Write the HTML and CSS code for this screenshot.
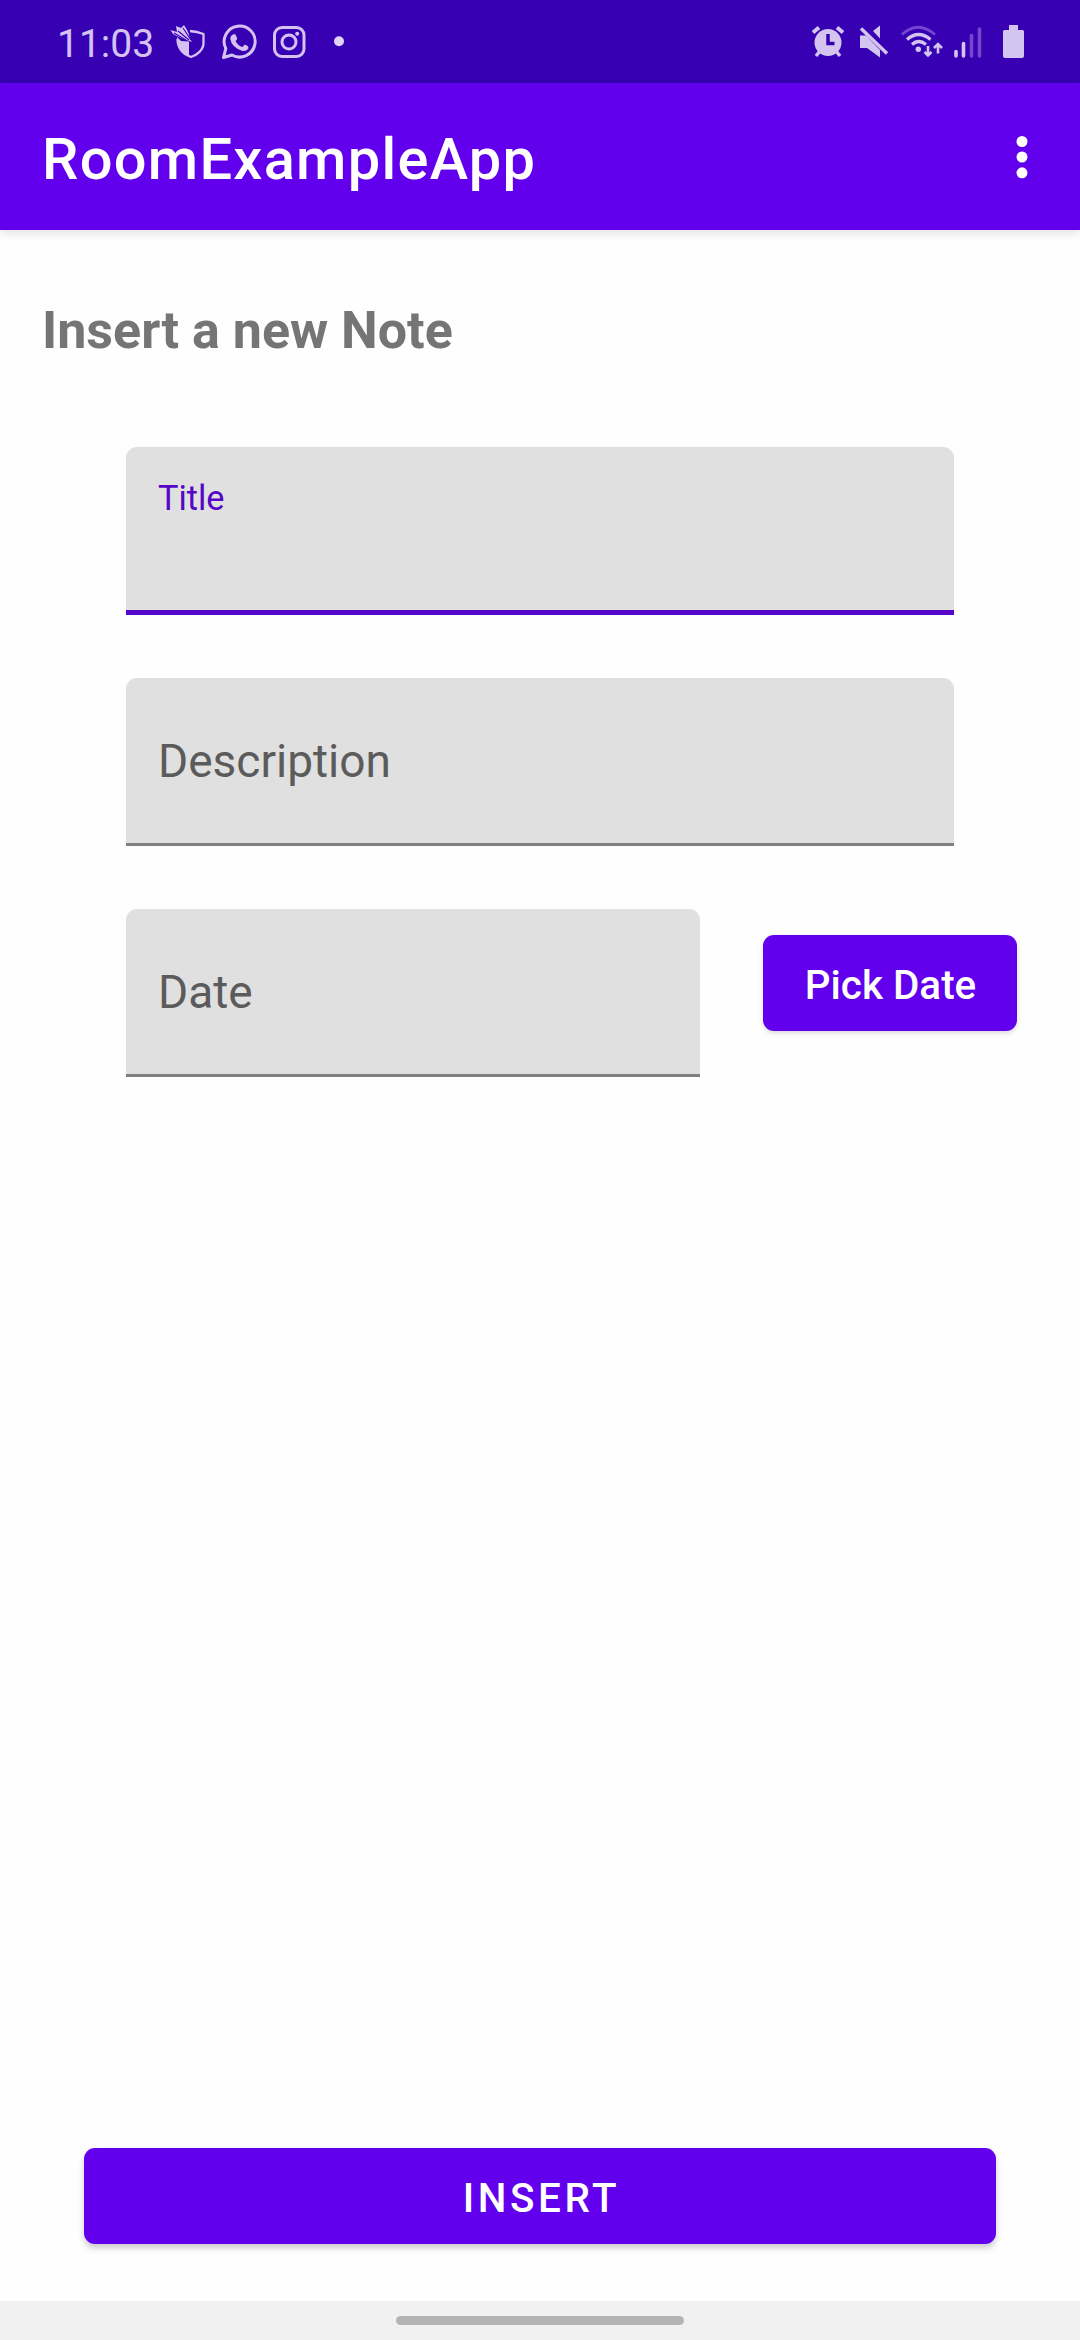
FILE: index.html
```html
<!DOCTYPE html>
<html lang="en">
<head>
<meta charset="utf-8">
<title>RoomExampleApp</title>
<link rel="stylesheet" href="styles.css">
</head>
<body>
<div class="screen">
  <div class="status-bar">
    <span class="clock">11:03</span>
    <svg class="notification-icons" width="185" height="83" viewBox="165 0 185 83" fill="none">
      <path d="M190 31Q197 31.500 203.500 34V43C203.500 50 197 55 191 57C183 54 177.500 48 177.500 39" stroke="#d5c2f2" stroke-width="2.300"/>
      <path d="M177 37L181 41L189 41.500V56C181 52 177 47 177 37ZM170.500 30L177 32L176 26L181 28L184 25L187 30L188.500 33L190 39L192 42L181 38L173 34Z" fill="#d5c2f2"/>
      <path d="M178 31L189 40M183 28L191 40M174 33L186 40" stroke="#3700b3" stroke-width="1.100"/>
      <path d="M223.500 57.500L225.800 48.500A15.500 15.500 0 1 1 232 55Z" stroke="#d5c2f2" stroke-width="3" stroke-linejoin="round"/>
      <path d="M233 34.500Q235 33 236.200 36L237.200 38.500Q237 40 235.500 41Q238 46 242.500 47L244.500 44.800Q248 45 248.500 48Q247 51.500 242.500 51Q231.500 47.500 230.200 38.500Q230.500 35.500 233 34.500Z" fill="#d5c2f2"/>
      <rect x="274.500" y="27.500" width="29.500" height="29" rx="7.500" stroke="#d5c2f2" stroke-width="3"/>
      <circle cx="289" cy="42" r="7" stroke="#d5c2f2" stroke-width="3"/>
      <circle cx="297.200" cy="33.800" r="2" fill="#d5c2f2"/>
      <circle cx="339" cy="41.300" r="5" fill="#e0d6f3"/>
    </svg>
    <svg class="system-icons" width="220" height="83" viewBox="810 0 220 83" fill="none">
      <path d="M813 32.500L819 27.500M837 27.500L843 32.500" stroke="#d3c5ef" stroke-width="4"/>
      <circle cx="828" cy="42.500" r="13.500" fill="#d3c5ef"/>
      <path d="M820 51L816 56M836 51L840 56" stroke="#d3c5ef" stroke-width="3.500"/>
      <path d="M828 34V43.500H834.500" stroke="#3700b3" stroke-width="3.500"/>
      <path d="M860 35.500H866L880 50V57.500L867 48H860ZM873 31L880 25.500V38.500Z" fill="#d3c5ef"/>
      <path d="M861 28.500L887 53.500" stroke="#d3c5ef" stroke-width="3.400"/>
      <path d="M902 34.500Q918 20 935 34.500" stroke="#7447ce" stroke-width="2.800"/>
      <path d="M907 39.500Q918.500 29.500 930.500 39.500M912 44.500Q918.500 38.500 926 44.500" stroke="#d3c5ef" stroke-width="3.200"/>
      <circle cx="918.300" cy="49.300" r="2.700" fill="#d3c5ef"/>
      <path d="M928 46V55M924.500 52L928 55.500L931.500 52M938 53.500V44M934 48L938 44L942 48" stroke="#d3c5ef" stroke-width="2.600"/>
      <path d="M956 51.500V56M963.500 43.500V56" stroke="#d3c5ef" stroke-width="3.600" stroke-linecap="round"/>
      <path d="M971.500 35.500V56M979.500 29V56" stroke="#7447ce" stroke-width="3.600" stroke-linecap="round"/>
      <path d="M1009 25H1018V30H1022.500Q1024 30 1024 31.500V56Q1024 58 1022 58H1005Q1003 58 1003 56V31.500Q1003 30 1004.500 30H1009Z" fill="#d3c5ef"/>
    </svg>
  </div>
  <header class="app-bar">
    <h1 class="app-title">RoomExampleApp</h1>
    <button class="menu-button" aria-label="More options">
      <svg width="12" height="44" viewBox="0 0 12 44" fill="#fff"><circle cx="6" cy="6.500" r="5.500"/><circle cx="6" cy="22" r="5.500"/><circle cx="6" cy="37.800" r="5.500"/></svg>
    </button>
  </header>
  <main class="content">
    <h2 class="heading">Insert a new Note</h2>
    <div class="form">
      <div class="field field-active"><span class="label-small">Title</span></div>
      <div class="field"><span class="hint">Description</span></div>
      <div class="date-row">
        <div class="field date-field"><span class="hint">Date</span></div>
        <button class="button pick-button">Pick Date</button>
      </div>
    </div>
    <button class="button insert-button">INSERT</button>
  </main>
  <div class="nav-bar"><div class="nav-handle"></div></div>
</div>
</body>
</html>
```
FILE: styles.css
```css
* { box-sizing: border-box; }
body { margin: 0; background: #fefefe; font-family: Roboto, sans-serif; }
h1, h2 { margin: 0; }
button { border: 0; padding: 0; font-family: inherit; }
svg { display: block; flex: none; }
.screen { width: 1080px; height: 2340px; display: flex; flex-direction: column; }
.status-bar { height: 83px; flex: none; display: flex; align-items: center; padding: 0 50px 0 57px; background: #3700b3; }
.clock { width: 108px; color: #d5c2f2; font-size: 39px; line-height: 46px; padding-top: 4px; white-space: nowrap; }
.system-icons { margin-left: auto; }
.app-bar { height: 147px; flex: none; display: flex; align-items: center; justify-content: space-between; padding: 0 52px 0 42px; background: #6200ee; box-shadow: 0 2px 10px rgba(0, 0, 0, .14); }
.app-title { color: #fff; font-size: 57.750px; font-weight: 500; letter-spacing: 1.300px; line-height: 68px; padding-top: 5px; }
.menu-button { background: none; }
.content { flex: 1; display: flex; flex-direction: column; padding-bottom: 57px; }
.heading { margin: 69px 42px 0; color: #757575; font-size: 52px; font-weight: 700; line-height: 64px; }
.form { display: flex; flex-direction: column; gap: 63px; margin: 84px 126px 0; }
.field { height: 168px; display: flex; align-items: center; padding: 0 32px 2px; border-radius: 11px 11px 0 0; background: #e0e0e0; box-shadow: inset 0 -3px #808080; }
.field-active { align-items: flex-start; padding-top: 31px; box-shadow: inset 0 -5px #5608c9; }
.label-small { color: #5607c6; font-size: 34.300px; line-height: 40px; }
.hint { color: #5b5b5b; font-size: 46px; line-height: 54px; }
.date-row { display: flex; align-items: flex-start; gap: 63px; margin-right: -63px; }
.date-field { flex: 1; }
.button { height: 96px; border-radius: 11px; color: #fff; background: #6200ee; font-size: 40.400px; font-weight: 500; line-height: 48px; padding-top: 6px; box-shadow: 0 4px 6px rgba(0, 0, 0, .2); }
.pick-button { width: 254px; margin-top: 26px; padding-left: 1px; box-shadow: 0 2px 5px rgba(0, 0, 0, .15); }
.insert-button { margin: auto 84px 0; padding-left: 3px; letter-spacing: 3.600px; }
.nav-bar { height: 39px; flex: none; display: flex; justify-content: center; padding-top: 15px; background: #f1f1f1; }
.nav-handle { width: 288px; height: 9px; border-radius: 5px; background: #b4b4b4; }
```
